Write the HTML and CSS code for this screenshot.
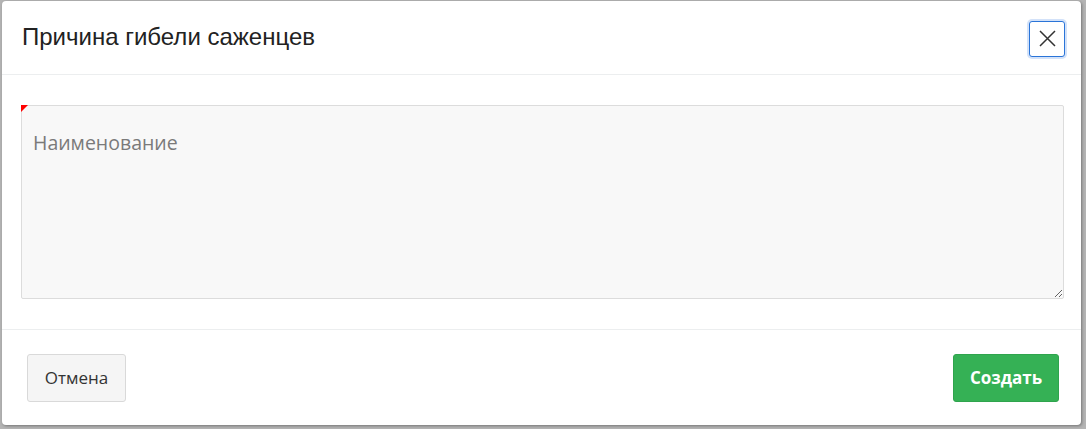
FILE: index.html
```html
<!DOCTYPE html>
<html lang="ru">
<head>
<meta charset="utf-8">
<link rel="stylesheet" href="styles.css">
</head>
<body>
<div class="modal">
  <div class="modal-header">
    <h5 class="modal-title">Причина гибели саженцев</h5>
    <button class="close" type="button" aria-label="Закрыть">
      <svg width="17" height="17" viewBox="0 0 17 17"><path d="M1 1 L16 16 M16 1 L1 16" stroke="#333" stroke-width="1.5" fill="none"/></svg>
    </button>
  </div>
  <div class="modal-body">
    <div class="field">
      <textarea class="input" placeholder="Наименование"></textarea>
      <span class="required"></span>
    </div>
  </div>
  <div class="modal-footer">
    <button class="btn btn-cancel" type="button">Отмена</button>
    <button class="btn btn-create" type="button">Создать</button>
  </div>
</div>
</body>
</html>
```
FILE: styles.css
```css
html, body {
  margin: 0;
  padding: 0;
  height: 100%;
}
body {
  background: #b4b4b4;
  padding: 1px 5px 4px 2px;
  box-sizing: border-box;
  font-family: "Open Sans", "Liberation Sans", sans-serif;
}
.modal {
  background: #fff;
  height: 424px;
  border-radius: 4px;
  box-shadow: 1px 1px 3px rgba(0,0,0,0.35);
  display: flex;
  flex-direction: column;
}
.modal-header {
  height: 73px;
  border-bottom: 1px solid #eceeef;
  display: flex;
  align-items: center;
  justify-content: space-between;
  padding: 0 16px 0 20px;
}
.modal-title {
  margin: 0;
  font-family: "Liberation Sans", Arial, sans-serif;
  font-weight: normal;
  font-size: 24px;
  color: #222;
  padding-bottom: 2px;
}
.close {
  width: 36px;
  height: 36px;
  border: 1px solid #2a74d8;
  border-radius: 3px;
  box-shadow: 0 0 0 2px rgba(80,140,230,0.25);
  background: #fff;
  display: flex;
  align-items: center;
  justify-content: center;
  padding: 0;
  margin-top: 2px;
}
.modal-body {
  padding: 30px 17px 30px 19px;
  border-bottom: 1px solid #eceeef;
}
.field {
  position: relative;
}
.input {
  display: block;
  width: 100%;
  box-sizing: border-box;
  height: 194px;
  background: #f8f8f8;
  border: 1px solid #dcdcdc;
  border-radius: 2px;
  padding: 23px 11px;
  font-family: "Open Sans", sans-serif;
  font-size: 19.5px;
  color: #333;
  resize: vertical;
}
.input::placeholder {
  color: #7a7a7a;
}
.required {
  position: absolute;
  left: 0;
  top: 0;
  width: 0;
  height: 0;
  border-top: 7px solid #f00;
  border-right: 7px solid transparent;
}
.modal-footer {
  flex: 1;
  display: flex;
  justify-content: space-between;
  align-items: center;
  padding: 0 22px 0 25px;
}
.btn {
  height: 48px;
  border-radius: 3px;
  font-family: "Open Sans", sans-serif;
  font-size: 17px;
  padding: 0 12px;
}
.btn-cancel {
  background: #f5f5f5;
  border: 1px solid #d9d9d9;
  color: #333;
  width: 99px;
}
.btn-create {
  background: #35b155;
  border: 1px solid #2fa44d;
  color: #fff;
  font-weight: bold;
  width: 106px;
}
```
